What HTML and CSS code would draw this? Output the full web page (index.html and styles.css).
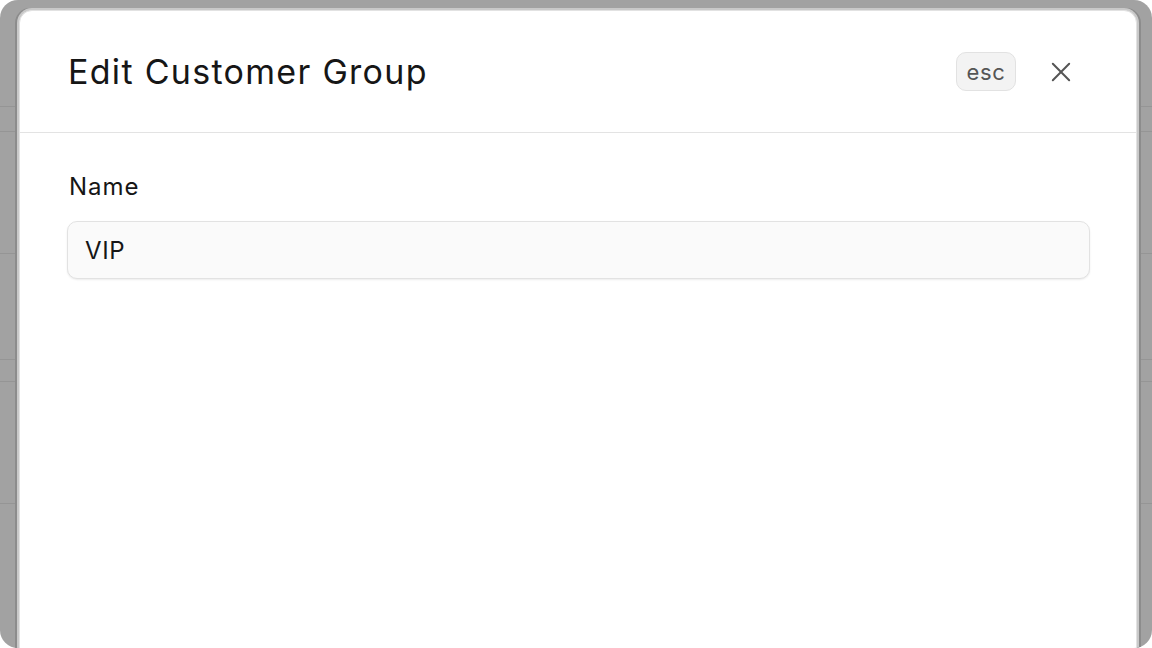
FILE: index.html
```html
<!DOCTYPE html>
<html lang="en">

<head>
    <meta charset="UTF-8">
    <meta name="viewport" content="width=device-width, initial-scale=1.0">
    <title>Edit Customer Group</title>
    <link rel="stylesheet" href="styles.css">
</head>

<body>
    <div class="screen">
        <div class="backdrop">
            <div class="row row-a"></div>
            <div class="row row-b"></div>
            <div class="row row-c"></div>
            <div class="row row-d"></div>
            <div class="row row-e"></div>
            <div class="row row-f"></div>
        </div>

        <div class="modal">
            <div class="modal-head">
                <h1>Edit Customer Group</h1>
                <div class="head-actions">
                    <span class="kbd">esc</span>
                    <button class="close" aria-label="Close">
                        <svg width="22" height="22" viewBox="0 0 22 22" fill="none" stroke="#555" stroke-width="2.2" stroke-linecap="round">
                            <path d="M2 2 L20 20 M20 2 L2 20" />
                        </svg>
                    </button>
                </div>
            </div>
            <div class="modal-body">
                <label for="groupName">Name</label>
                <input type="text" id="groupName" value="VIP" />
            </div>
        </div>
    </div>
</body>

</html>
```

FILE: styles.css
```css
html {
    background: #fff;
}

body {
    margin: 0;
    font-family: Inter, "Noto Sans", Arial, sans-serif;
    color: #1c1c1c;
}

.screen {
    position: relative;
    width: 1152px;
    height: 648px;
    border-radius: 18px;
    overflow: hidden;
    background: #a2a2a2;
}

.backdrop {
    display: flex;
    flex-direction: column;
}

.row {
    border-bottom: 1px solid #959595;
}

.row-a {
    height: 106px;
}

.row-b {
    height: 24px;
}

.row-c {
    height: 121px;
}

.row-d {
    height: 105px;
}

.row-e {
    height: 21px;
}

.row-f {
    height: 121px;
}

.modal {
    position: absolute;
    left: 19px;
    top: 10px;
    width: 1116px;
    height: 700px;
    background: #fff;
    border: 1px solid #e2e2e2;
    border-radius: 13px;
    box-shadow: 0 0 0 2px #c9c9c9, -2px 0 0 2px #8c8c8c, 2px 0 0 2px #8c8c8c;
}

.modal-head {
    display: flex;
    align-items: center;
    justify-content: space-between;
    height: 121px;
    padding: 0 65px 0 48px;
    border-bottom: 1px solid #e3e3e3;
}

h1 {
    margin: 0;
    font-size: 34px;
    font-weight: 400;
    letter-spacing: 1.3px;
    color: #161616;
}

.head-actions {
    display: flex;
    align-items: center;
    gap: 35px;
}

.kbd {
    display: inline-flex;
    align-items: center;
    justify-content: center;
    width: 58px;
    height: 37px;
    border: 1px solid #e2e2e2;
    border-radius: 10px;
    background: #f3f3f3;
    color: #555;
    font-size: 22px;
    letter-spacing: 0.6px;
}

.close {
    display: flex;
    padding: 0;
    border: 0;
    background: none;
    cursor: pointer;
}

.close svg {
    width: 20px;
    height: 20px;
}

.modal-body {
    display: flex;
    flex-direction: column;
    padding: 39px 46px 0 47px;
}

label {
    font-size: 24px;
    letter-spacing: 1px;
    color: #161616;
    margin-left: 2px;
    margin-bottom: 20px;
}

input[type="text"] {
    height: 58px;
    box-sizing: border-box;
    padding: 0 17px;
    border: 1px solid #e2e2e2;
    border-radius: 10px;
    background: #fafafa;
    box-shadow: 0 1px 2px rgba(0, 0, 0, 0.08);
    font-family: inherit;
    font-size: 24px;
    letter-spacing: 0.6px;
    color: #161616;
    outline: none;
}
```
